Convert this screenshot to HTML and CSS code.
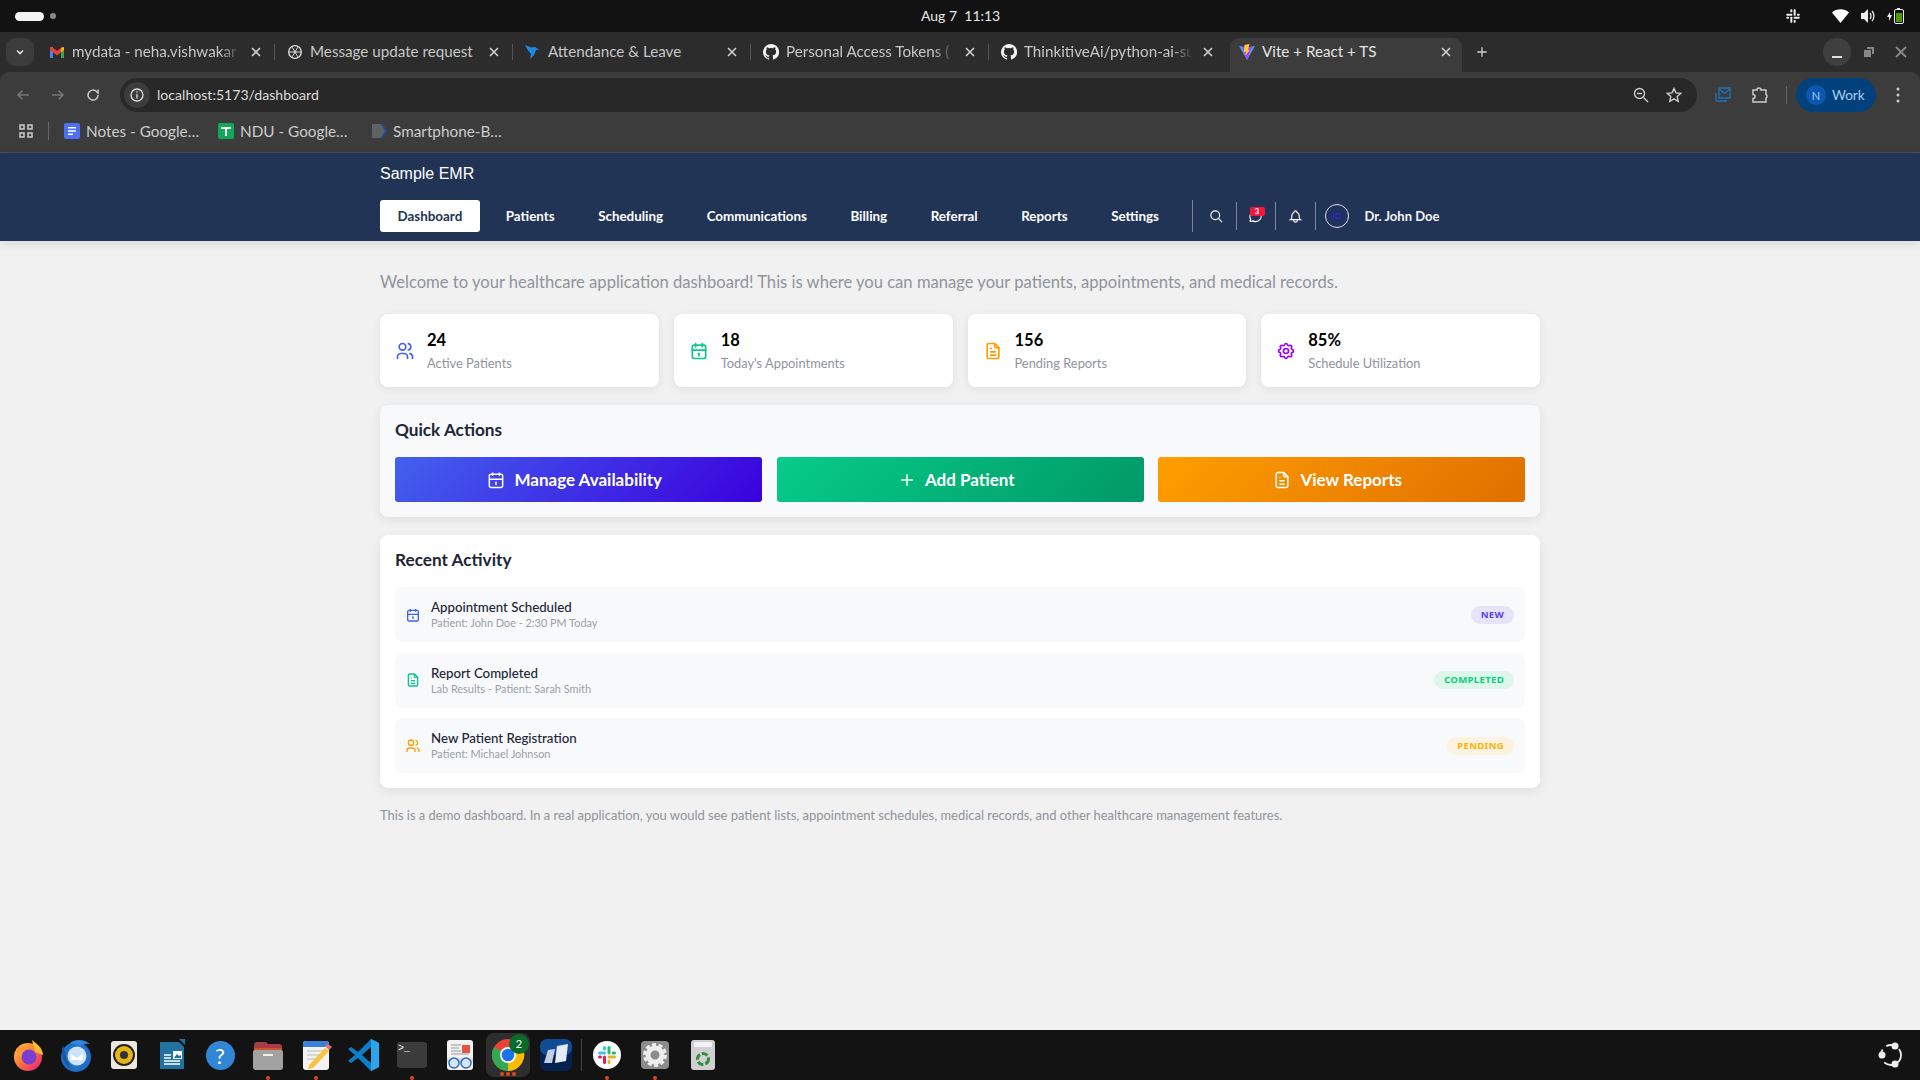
FILE: index.html
```html
<!DOCTYPE html>
<html lang="en">
<head>
<meta charset="utf-8">
<title>Vite + React + TS</title>
<link rel="stylesheet" href="styles.css">
</head>
<body>
<svg class="defs" width="0" height="0" aria-hidden="true">
  <symbol id="i-users" viewBox="0 0 24 24"><circle cx="9" cy="7" r="4"/><path d="M3 21v-2a4 4 0 0 1 4-4h4a4 4 0 0 1 4 4v2"/><path d="M16 3.13a4 4 0 0 1 0 7.75"/><path d="M21 21v-2a4 4 0 0 0-3-3.85"/></symbol>
  <symbol id="i-cal" viewBox="0 0 24 24"><rect x="4" y="5" width="16" height="16" rx="2"/><path d="M16 3v4M8 3v4M4 11h16M11 15h1v3"/></symbol>
  <symbol id="i-doc" viewBox="0 0 24 24"><path d="M14 3v4a1 1 0 0 0 1 1h4"/><path d="M17 21H7a2 2 0 0 1-2-2V5a2 2 0 0 1 2-2h7l5 5v11a2 2 0 0 1-2 2z"/><path d="M9 9h1M9 13h6M9 17h6"/></symbol>
  <symbol id="i-gear" viewBox="0 0 24 24"><path d="M10.325 4.317c.426-1.756 2.924-1.756 3.35 0a1.724 1.724 0 0 0 2.573 1.066c1.543-.94 3.31.826 2.37 2.37a1.724 1.724 0 0 0 1.065 2.572c1.756.426 1.756 2.924 0 3.35a1.724 1.724 0 0 0-1.066 2.573c.94 1.543-.826 3.31-2.37 2.37a1.724 1.724 0 0 0-2.572 1.065c-.426 1.756-2.924 1.756-3.35 0a1.724 1.724 0 0 0-2.573-1.066c-1.543.94-3.31-.826-2.37-2.37a1.724 1.724 0 0 0-1.065-2.572c-1.756-.426-1.756-2.924 0-3.35a1.724 1.724 0 0 0 1.066-2.573c-.94-1.543.826-3.31 2.37-2.37 1 .608 2.296.07 2.572-1.065z"/><circle cx="12" cy="12" r="3"/></symbol>
  <symbol id="i-plus" viewBox="0 0 24 24"><path d="M12 5v14M5 12h14"/></symbol>
  <symbol id="i-search" viewBox="0 0 24 24"><circle cx="10" cy="10" r="7"/><path d="M21 21l-6-6"/></symbol>
  <symbol id="i-msg" viewBox="0 0 24 24"><path d="M3 20l1.3-3.9C1.976 12.663 2.874 8.228 6.4 5.726c3.526-2.501 8.59-2.296 11.845.48 3.255 2.777 3.695 7.266 1.029 10.501-2.666 3.235-7.615 4.215-11.574 2.293L3 20"/></symbol>
  <symbol id="i-bell" viewBox="0 0 24 24"><path d="M10 5a2 2 0 1 1 4 0 7 7 0 0 1 4 6v3a4 4 0 0 0 2 3H4a4 4 0 0 0 2-3v-3a7 7 0 0 1 4-6"/><path d="M9 17v1a3 3 0 0 0 6 0v-1"/></symbol>
  <symbol id="i-x" viewBox="0 0 12 12"><path d="M2 2l8 8M10 2l-8 8"/></symbol>
  <symbol id="i-gh" viewBox="0 0 16 16"><path d="M8 0a8 8 0 0 0-2.53 15.59c.4.07.55-.17.55-.38v-1.34c-2.23.48-2.7-1.07-2.7-1.07-.36-.93-.89-1.17-.89-1.17-.73-.5.05-.49.05-.49.8.06 1.23.83 1.23.83.72 1.22 1.87.87 2.33.66.07-.52.28-.87.5-1.07-1.78-.2-3.64-.89-3.64-3.95 0-.87.31-1.59.82-2.15-.08-.2-.36-1.02.08-2.12 0 0 .67-.21 2.2.82a7.6 7.6 0 0 1 4 0c1.53-1.04 2.2-.82 2.2-.82.44 1.1.16 1.92.08 2.12.51.56.82 1.27.82 2.15 0 3.07-1.87 3.75-3.65 3.95.29.25.54.73.54 1.48v2.2c0 .21.15.46.55.38A8 8 0 0 0 8 0z"/></symbol>
</svg>

<div class="topbar">
  <div class="activities"><span class="pill"></span><span class="dot"></span></div>
  <div class="clock">Aug 7&nbsp;&nbsp;11:13</div>
  <div class="tray">
    <svg class="tray-slack" width="16" height="16" viewBox="0 0 24 24"><g fill="#eee"><rect x="2" y="8.500" width="9" height="3" rx="1"/><rect x="8" y="2" width="3" height="4.500" rx="1"/><rect x="13" y="2" width="3" height="9.500" rx="1"/><rect x="18" y="8.500" width="4" height="3" rx="1"/><rect x="13" y="13" width="9" height="3" rx="1"/><rect x="13" y="18" width="3" height="4" rx="1"/><rect x="8" y="13" width="3" height="9" rx="1"/><rect x="2" y="13" width="4" height="3" rx="1"/></g></svg>
    <svg class="tray-wifi" width="17" height="14" viewBox="0 0 17 14"><path fill="#fff" d="M0 3.5C4.5-.8 12.500-.8 17 3.500L8.500 14z"/></svg>
    <svg class="tray-vol" width="16" height="16" viewBox="0 0 16 16"><path fill="#eee" d="M1 5h3l4-4v14l-4-4H1z"/><path fill="none" stroke="#eee" stroke-width="1.300" d="M10 5c1.300 1.500 1.300 4.500 0 6M12 3c2.500 2.500 2.500 7.500 0 10"/></svg>
    <svg class="tray-bat" width="18" height="18" viewBox="0 0 18 18"><path fill="#eee" d="M3 5L0 10h2v4l3-6H3z"/><rect x="7.500" y="2.500" width="9" height="14" rx="1.500" fill="none" stroke="#eee"/><rect x="7" y="1" width="3" height="1" fill="#eee" transform="translate(3 0)"/><rect x="9" y="6" width="6" height="9" fill="#4e9a06"/></svg>
  </div>
</div>

<div class="browser">
<div class="tabstrip">
  <div class="tablist"><svg width="12" height="12" viewBox="0 0 12 12"><path d="M3 4.500l3 3 3-3" fill="none" stroke="#e0e0e0" stroke-width="1.600"/></svg></div>
  <div class="tab">
    <svg class="fav" width="16" height="16" viewBox="0 0 16 16"><path fill="#4285f4" d="M1 3h3v11H1z"/><path fill="#34a853" d="M12 3h3v11h-3z"/><path fill="#ea4335" d="M1 3h2l5 4 5-4h2v3l-7 5.500L1 6z"/><path fill="#fbbc04" d="M12 4.500L15 3v3l-3 2.300z"/></svg>
    <span class="title fade">mydata - neha.vishwakar</span><svg class="close"><use href="#i-x"/></svg>
  </div>
  <div class="tab">
    <svg class="fav" width="16" height="16" viewBox="0 0 24 24"><circle cx="12" cy="12" r="9.500" fill="none" stroke="#ddd" stroke-width="2"/><path fill="none" stroke="#ddd" stroke-width="1.500" d="M8 5l8 14M16 5L8 19M3 12h18"/></svg>
    <span class="title">Message update request</span><svg class="close"><use href="#i-x"/></svg>
  </div>
  <div class="tab">
    <svg class="fav" width="16" height="16" viewBox="0 0 16 16"><path fill="#1e88e5" d="M0 1l6 2.500L10 3l4 2.500-3 .5-2 5-4 4 1-5-3-3.500z"/></svg>
    <span class="title">Attendance &amp; Leave</span><svg class="close"><use href="#i-x"/></svg>
  </div>
  <div class="tab">
    <svg class="fav gh"><use href="#i-gh"/></svg>
    <span class="title fade">Personal Access Tokens (</span><svg class="close"><use href="#i-x"/></svg>
  </div>
  <div class="tab last">
    <svg class="fav gh"><use href="#i-gh"/></svg>
    <span class="title fade">ThinkitiveAi/python-ai-su</span><svg class="close"><use href="#i-x"/></svg>
  </div>
  <div class="tab active">
    <svg class="fav" width="16" height="16" viewBox="0 0 16 16"><path fill="#41a5ee" d="M0 2l8 1.500L16 2 8 16z"/><path fill="#bd34fe" d="M3 2.500l5 1 5-1L8 16z"/><path fill="#ffd028" d="M10.500 0L5.500 1l-.5 7 2-.5-.5 4L11 5.500l-2 .5z"/></svg>
    <span class="title">Vite + React + TS</span><svg class="close"><use href="#i-x"/></svg>
  </div>
  <div class="newtab"><svg width="16" height="16"><use href="#i-plus"/></svg></div>
  <div class="winctl">
    <span class="wc wc-min"><i></i></span>
    <span class="wc"><svg width="12" height="12" viewBox="0 0 12 12"><path fill="#888" d="M4 1h7v7H9V3H4z"/><rect x="1" y="4" width="7" height="7" fill="#888"/></svg></span>
    <span class="wc"><svg width="12" height="12" viewBox="0 0 12 12"><path d="M1 1l10 10M11 1L1 11" stroke="#888" stroke-width="1.800"/></svg></span>
  </div>
</div>

<div class="chrome-body">
  <div class="toolbar">
    <svg class="nav-ic" width="16" height="16" viewBox="0 0 16 16"><path d="M14 8H3M7.500 3.500L3 8l4.500 4.500" fill="none" stroke="#777" stroke-width="1.500"/></svg>
    <svg class="nav-ic" width="16" height="16" viewBox="0 0 16 16"><path d="M2 8h11M8.500 3.500L13 8l-4.500 4.500" fill="none" stroke="#777" stroke-width="1.500"/></svg>
    <svg class="nav-ic" width="16" height="16" viewBox="0 0 16 16"><path d="M13 8a5 5 0 1 1-1.500-3.500L13 6V2.500" fill="none" stroke="#ccc" stroke-width="1.500"/></svg>
    <div class="omnibox">
      <span class="site-info"><svg width="14" height="14" viewBox="0 0 14 14"><circle cx="7" cy="7" r="6" fill="none" stroke="#ddd" stroke-width="1.300"/><path d="M7 6v4.500" stroke="#ddd" stroke-width="1.300"/><circle cx="7" cy="4" r=".8" fill="#ddd"/></svg></span>
      <span class="url">localhost:5173/dashboard</span>
      <svg class="omni-zoom" width="16" height="16" viewBox="0 0 16 16"><circle cx="6.500" cy="6.500" r="5" fill="none" stroke="#ccc" stroke-width="1.400"/><path d="M10.500 10.500L15 15M4 6.500h5" stroke="#ccc" stroke-width="1.400"/></svg>
      <svg class="omni-star" width="16" height="16" viewBox="0 0 16 16"><path d="M8 1.500l2 4.400 4.700.5-3.500 3.200 1 4.700L8 11.900l-4.200 2.400 1-4.700L1.300 6.400 6 5.900z" fill="none" stroke="#ccc" stroke-width="1.400"/></svg>
    </div>
    <svg class="tb-ext" width="16" height="16" viewBox="0 0 16 16"><path d="M1 6v8h11M4 4V1h11v10H4z" fill="none" stroke="#1c74b8" stroke-width="1.300"/><path d="M4 2l5.500 4.500L15 2" fill="none" stroke="#1c74b8" stroke-width="1.300"/></svg>
    <svg class="tb-puzzle" width="18" height="18" viewBox="0 0 18 18"><path d="M2 4h4a2 2 0 0 1 4 0h5v4.500a2 2 0 0 1 0 3.500V16H2v-3.500a2 2 0 0 0 0-4z" fill="none" stroke="#ccc" stroke-width="1.500"/></svg>
    <span class="tb-sep"></span>
    <div class="profile"><span class="avatar-n">N</span><span>Work</span></div>
    <svg class="tb-menu" width="4" height="16" viewBox="0 0 4 16"><circle cx="2" cy="2" r="1.500" fill="#ccc"/><circle cx="2" cy="8" r="1.500" fill="#ccc"/><circle cx="2" cy="14" r="1.500" fill="#ccc"/></svg>
  </div>
  <div class="bookmarks">
    <svg class="bm-apps" width="14" height="14" viewBox="0 0 14 14"><path fill="none" stroke="#ccc" stroke-width="1.500" d="M1 1h4v4H1zM9 1h4v4H9zM1 9h4v4H1zM9 9h4v4H9z"/></svg>
    <span class="bm-sep"></span>
    <div class="bm bm-1"><svg width="16" height="16" viewBox="0 0 16 16"><rect width="16" height="16" rx="2" fill="#4d6ff1"/><path d="M4 4h8v1.500H4zM4 7.200h8v1.500H4zM4 10.500h5V12H4z" fill="#fff"/></svg><span>Notes - Google…</span></div>
    <div class="bm bm-2"><svg width="16" height="16" viewBox="0 0 16 16"><rect width="16" height="16" rx="2" fill="#0fa958"/><path d="M3 4h10v2H9v7H7V6H3z" fill="#fff"/></svg><span>NDU - Google…</span></div>
    <div class="bm bm-3"><svg width="16" height="16" viewBox="0 0 16 16"><path d="M1 1h9l4 7-4 7H1z" fill="#5f6368"/><path d="M10 1l4 7-4 7h2l4-7-4-7z" fill="#1a4fa0"/></svg><span>Smartphone-B…</span></div>
  </div>
</div>
</div>

<header class="app-header">
  <div class="container">
    <div class="brand">Sample EMR</div>
    <nav class="nav">
      <a class="nav-item active">Dashboard</a>
      <a class="nav-item">Patients</a>
      <a class="nav-item">Scheduling</a>
      <a class="nav-item">Communications</a>
      <a class="nav-item">Billing</a>
      <a class="nav-item">Referral</a>
      <a class="nav-item">Reports</a>
      <a class="nav-item">Settings</a>
      <span class="vsep first"></span>
      <span class="nav-icon nav-icon-first"><svg class="ic-15"><use href="#i-search"/></svg></span>
      <span class="vsep short"></span>
      <span class="nav-icon badge-host"><svg class="ic-15"><use href="#i-msg"/></svg><b class="count">3</b></span>
      <span class="vsep short"></span>
      <span class="nav-icon"><svg class="ic-15"><use href="#i-bell"/></svg></span>
      <span class="vsep short"></span>
      <span class="user-avatar">JD</span>
      <span class="user-name">Dr. John Doe</span>
    </nav>
  </div>
</header>

<main class="main">
  <div class="container">
    <p class="welcome">Welcome to your healthcare application dashboard! This is where you can manage your patients, appointments, and medical records.</p>
    <section class="stats">
      <div class="stat"><svg class="stat-ic c-blue"><use href="#i-users"/></svg><div><div class="num">24</div><div class="lbl">Active Patients</div></div></div>
      <div class="stat"><svg class="stat-ic c-green"><use href="#i-cal"/></svg><div><div class="num">18</div><div class="lbl">Today's Appointments</div></div></div>
      <div class="stat"><svg class="stat-ic c-orange"><use href="#i-doc"/></svg><div><div class="num">156</div><div class="lbl">Pending Reports</div></div></div>
      <div class="stat"><svg class="stat-ic c-purple"><use href="#i-gear"/></svg><div><div class="num">85%</div><div class="lbl">Schedule Utilization</div></div></div>
    </section>
    <section class="panel panel-tint">
      <h2 class="panel-title">Quick Actions</h2>
      <div class="actions">
        <button class="action a-blue"><svg class="ic-20"><use href="#i-cal"/></svg>Manage Availability</button>
        <button class="action a-green"><svg class="ic-20"><use href="#i-plus"/></svg>Add Patient</button>
        <button class="action a-orange"><svg class="ic-20"><use href="#i-doc"/></svg>View Reports</button>
      </div>
    </section>
    <section class="panel panel-recent">
      <h2 class="panel-title">Recent Activity</h2>
      <div class="rows">
        <div class="row"><svg class="row-ic c-blue"><use href="#i-cal"/></svg><div class="row-text"><div class="row-title">Appointment Scheduled</div><div class="row-sub">Patient: John Doe - 2:30 PM Today</div></div><span class="tag t-new">NEW</span></div>
        <div class="row"><svg class="row-ic c-green"><use href="#i-doc"/></svg><div class="row-text"><div class="row-title">Report Completed</div><div class="row-sub">Lab Results - Patient: Sarah Smith</div></div><span class="tag t-done">COMPLETED</span></div>
        <div class="row"><svg class="row-ic c-orange"><use href="#i-users"/></svg><div class="row-text"><div class="row-title">New Patient Registration</div><div class="row-sub">Patient: Michael Johnson</div></div><span class="tag t-pend">PENDING</span></div>
      </div>
    </section>
    <p class="note">This is a demo dashboard. In a real application, you would see patient lists, appointment schedules, medical records, and other healthcare management features.</p>
  </div>
</main>

<footer class="dock">
  <span class="app"><svg width="36" height="36" viewBox="0 0 36 36"><defs><linearGradient id="ff" x1="0" y1="0" x2="1" y2="1"><stop offset="0" stop-color="#ffd43b"/><stop offset=".5" stop-color="#ff7139"/><stop offset="1" stop-color="#e31587"/></linearGradient></defs><circle cx="18" cy="20" r="14" fill="url(#ff)"/><path d="M22 3c4 3 11 8 11 15l-8-3z" fill="#ffbd2e"/><circle cx="19" cy="20" r="7.500" fill="#7a3fd1"/><path d="M6 12c4-4 9-3 13 0-5 0-8 3-7 8-3-1-6-4-6-8z" fill="#ff9a3c"/></svg></span>
  <span class="app"><svg width="36" height="36" viewBox="0 0 36 36"><circle cx="18" cy="20" r="15" fill="#1f6fc9"/><path d="M5 8c-3 8 0 20 9 24C8 25 7 15 5 8z" fill="#155a9f"/><path d="M12 6c6-5 15-3 20 1-6-1-8 1-9 2z" fill="#2f86dd"/><circle cx="19" cy="19" r="9.500" fill="#cfe3f7"/><path d="M13 17l6 4 6-4v6H13z" fill="#fff"/></svg></span>
  <span class="app"><svg width="36" height="36" viewBox="0 0 36 36"><rect x="5" y="4" width="26" height="28" rx="3" fill="#ece8db"/><circle cx="18" cy="18" r="11" fill="#222"/><circle cx="18" cy="18" r="9" fill="#e7b416"/><circle cx="18" cy="18" r="4" fill="#333"/></svg></span>
  <span class="app"><svg width="36" height="36" viewBox="0 0 36 36"><path d="M6 5h19l5 5v22H6z" fill="#21729e"/><path d="M25 2l6 0v6z" fill="#21729e"/><path d="M10 18h7M10 21h7M10 24h16M10 27h16" stroke="#fff" stroke-width="1.300"/><path d="M19 14h9v8h-9z" fill="#fff"/><path d="M20 21l3-4 2 2 2-1v3z" fill="#21729e"/></svg></span>
  <span class="app"><span class="help">?</span></span>
  <span class="app run"><svg width="36" height="36" viewBox="0 0 36 36"><path d="M4 8a3 3 0 0 1 3-3h9l2 2h11a3 3 0 0 1 3 3v4H4z" fill="#a63c48"/><path d="M4 11h28v4H4z" fill="#d2562c"/><path d="M3 15a2 2 0 0 1 2-2h26a2 2 0 0 1 2 2v15a3 3 0 0 1-3 3H6a3 3 0 0 1-3-3z" fill="#a2a2a2"/><rect x="13" y="17" width="10" height="2" fill="#eee"/></svg></span>
  <span class="app run"><svg width="36" height="36" viewBox="0 0 36 36"><rect x="5" y="4" width="26" height="29" rx="3" fill="#f2f2f2"/><path d="M5 7a3 3 0 0 1 3-3h20a3 3 0 0 1 3 3v3H5z" fill="#3c7fd9"/><path d="M9 14h18M9 18h14M9 22h10" stroke="#bbb"/><path d="M11 28L27 11l4 3-16 17-5 1z" fill="#f6c343"/><path d="M27 9l3-2 4 3-3 3z" fill="#ee6a72"/></svg></span>
  <span class="app"><svg width="36" height="36" viewBox="0 0 36 36"><path d="M25 2l8 4v24l-8 4-13-13-7 5-3-2 7-6-7-6 3-2 7 5z" fill="#0a7ec9"/><path d="M25 2l8 4v24l-8 4z" fill="#2aa4ec"/><path d="M25 10l-9 8 9 8z" fill="#131313"/></svg></span>
  <span class="app run"><span class="term">&gt;_</span></span>
  <span class="app"><svg width="36" height="36" viewBox="0 0 36 36"><rect x="5" y="3" width="26" height="30" rx="3" fill="#f2f2f2"/><path d="M9 8h10M9 11h8M9 14h10M9 17h18" stroke="#999"/><rect x="20" y="8" width="8" height="8" fill="#e25546"/><path d="M5 21h26v4H5z" fill="#ddd"/><circle cx="12" cy="26" r="5" fill="#d6e4f5" stroke="#2c6cb4" stroke-width="1.500"/><circle cx="24" cy="26" r="5" fill="#d6e4f5" stroke="#2c6cb4" stroke-width="1.500"/></svg></span>
  <span class="app chrome-app">
    <svg width="36" height="36" viewBox="0 0 36 36"><circle cx="18" cy="18" r="16" fill="#ea4335"/><path d="M18 18L32 10a16 16 0 0 1-14 24z" fill="#fbbc04"/><path d="M18 18v16A16 16 0 0 1 4.140 10z" fill="#34a853"/><circle cx="18" cy="18" r="8" fill="#fff"/><circle cx="18" cy="18" r="6.300" fill="#1a73e8"/></svg>
    <b class="chrome-count">2</b>
    <i class="trio"></i>
  </span>
  <span class="app app-tight"><svg width="36" height="36" viewBox="0 0 36 36"><rect x="2" y="2" width="32" height="32" rx="7" fill="#06224c"/><rect x="2" y="2" width="32" height="16" rx="7" fill="#0f4c94"/><path d="M19 9l11-2-2 17-11 2z" fill="#e6ecf7"/><path d="M10 13l7-1-3 14H6z" fill="#c3cfe4"/></svg></span>
  <span class="dock-sep"></span>
  <span class="app run"><span class="slack-disc"><svg width="24" height="24" viewBox="0 0 24 24"><rect x="3" y="8.500" width="8" height="3" rx="1.500" fill="#36c5f0"/><rect x="8" y="3" width="3" height="4.500" rx="1.500" fill="#36c5f0"/><rect x="12.500" y="3" width="3" height="8.500" rx="1.500" fill="#2eb67d"/><rect x="16.500" y="8.500" width="4.500" height="3" rx="1.500" fill="#2eb67d"/><rect x="12.500" y="12.500" width="8.500" height="3" rx="1.500" fill="#ecb22e"/><rect x="12.500" y="16.500" width="3" height="4.500" rx="1.500" fill="#ecb22e"/><rect x="8" y="12.500" width="3" height="8.500" rx="1.500" fill="#e01e5a"/><rect x="3" y="12.500" width="4" height="3" rx="1.500" fill="#e01e5a"/></svg></span></span>
  <span class="app run"><svg width="36" height="36" viewBox="0 0 36 36"><rect x="4" y="4" width="28" height="28" rx="4" fill="#8c8c8c"/><circle cx="18" cy="18" r="7" fill="none" stroke="#eee" stroke-width="5"/><circle cx="18" cy="18" r="10.500" fill="none" stroke="#eee" stroke-width="3" stroke-dasharray="4 2.600"/></svg></span>
  <span class="app"><svg width="36" height="36" viewBox="0 0 36 36"><rect x="6" y="3" width="24" height="30" rx="3" fill="#d0d0d0"/><rect x="9" y="5" width="18" height="5" rx="1" fill="#f3f3f3"/><circle cx="18" cy="22" r="5.500" fill="none" stroke="#2f8f3d" stroke-width="3" stroke-dasharray="6 2"/></svg></span>
  <span class="dock-spacer"></span>
  <span class="app app-last"><svg width="26" height="26" viewBox="0 0 26 26"><circle cx="13" cy="13" r="10" fill="none" stroke="#eee" stroke-width="1.800" stroke-dasharray="9 5"/><circle cx="17" cy="4" r="3.500" fill="#eee"/><circle cx="4" cy="13" r="3.500" fill="#eee"/><circle cx="17" cy="22" r="3.500" fill="#eee"/></svg></span>
</footer>
</body>
</html>
```
FILE: styles.css
```css
* { box-sizing: border-box; }
html, body { margin: 0; height: 100%; }
body {
  width: 1920px; height: 1080px; overflow: hidden;
  display: flex; flex-direction: column;
  background: #f1f1f1;
  font-family: Lato, "Noto Sans", sans-serif;
}
.defs { position: absolute; }

/* GNOME top bar */
.topbar { flex: 0 0 32px; background: #121212; display: flex; align-items: center; position: relative; color: #eee; }
.activities { display: flex; align-items: center; gap: 6px; padding-left: 15px; }
.pill { width: 29px; height: 9px; border-radius: 5px; background: #f4f4f4; }
.dot { width: 6px; height: 6px; border-radius: 50%; background: #8b8b8b; }
.clock { position: absolute; left: 921px; top: 7px; font-size: 14px; line-height: 18px; color: #e8e8e8; }
.tray { margin-left: auto; display: flex; align-items: center; padding-right: 15px; }
.tray-slack { margin-right: 31px; }
.tray-wifi { margin-right: 11px; }
.tray-vol { margin-right: 11px; }

/* Browser */
.browser { flex: 0 0 121px; background: #2c2c2c; }
.tabstrip { height: 40px; display: flex; align-items: flex-end; padding-left: 6px; color: #c7c7c7; }
.tablist { width: 28px; height: 28px; margin-bottom: 6px; border-radius: 9px; background: #3c3c3c; display: flex; align-items: center; justify-content: center; }
.tab { width: 238px; height: 34px; display: flex; align-items: center; padding: 0 0 6px 15px; position: relative; font-size: 15.200px; flex: none; }
.tab::after { content: ""; position: absolute; right: -3px; top: 6px; height: 16px; width: 1px; background: #555; }
.tab.last::after, .tab.active::after { display: none; }
.tab.active { width: 232px; margin-left: 6px; padding-left: 9px; background: #3c3c3c; border-radius: 9px 9px 0 0; color: #e3e3e3; }
.fav { width: 16px; height: 16px; flex: none; margin-right: 7px; }
.fav.gh { fill: #f2f2f2; }
.title { width: 174px; overflow: hidden; white-space: nowrap; flex: none; margin-bottom: 2px; }
.title.fade { -webkit-mask-image: linear-gradient(90deg, #000 85%, transparent 97%); mask-image: linear-gradient(90deg, #000 85%, transparent 97%); }
.close { width: 12px; height: 12px; flex: none; margin-left: 4px; stroke: #d0d0d0; stroke-width: 1.600; fill: none; }
.newtab { width: 40px; height: 34px; padding: 0 0 6px 12px; display: flex; align-items: center; stroke: #d0d0d0; stroke-width: 2; fill: none; }
.winctl { margin-left: auto; display: flex; align-items: center; height: 34px; padding-bottom: 6px; padding-right: 3px; }
.wc { width: 32px; height: 28px; display: flex; align-items: center; justify-content: center; }
.wc-min { width: 28px; margin-right: 2px; border-radius: 50%; background: #3f3f3f; align-items: flex-end; padding-bottom: 8px; }
.wc-min i { width: 10px; height: 2px; background: #ddd; display: block; }

.chrome-body { height: 81px; background: #3c3c3c; border-bottom: 1px solid #505050; border-radius: 9px 9px 0 0; color: #ccc; }
.toolbar { height: 40px; display: flex; align-items: center; padding-left: 15px; padding-top: 6px; }
.nav-ic { margin-right: 19px; flex: none; }
.nav-ic:nth-child(3) { margin-right: 0; }
.omnibox { margin-left: 19px; width: 1577px; height: 34px; border-radius: 17px; background: #282828; display: flex; align-items: center; padding-left: 4px; flex: none; }
.site-info { width: 26px; height: 26px; border-radius: 50%; background: #3c3c3c; display: flex; align-items: center; justify-content: center; flex: none; }
.url { margin-left: 7px; margin-bottom: 2px; font-size: 14.100px; color: #dcdcdc; }
.omni-zoom { margin-left: auto; }
.omni-star { margin-left: 17px; margin-right: 15px; }
.tb-ext { margin-left: 18px; flex: none; }
.tb-puzzle { margin-left: 20px; flex: none; }
.tb-sep { width: 1px; height: 18px; background: #666; margin-left: 17px; flex: none; }
.profile { margin-left: 9px; width: 80px; height: 34px; border-radius: 17px; background: #02417c; display: flex; align-items: center; font-size: 13.500px; color: #a9cdf2; padding-left: 10px; gap: 6px; flex: none; }
.avatar-n { width: 20px; height: 20px; border-radius: 50%; background: #0b57b0; display: flex; align-items: center; justify-content: center; font-size: 11px; }
.tb-menu { margin-left: 20px; flex: none; }
.bookmarks { height: 40px; display: flex; align-items: center; padding: 0 0 2px 19px; font-size: 15.300px; }
.bm-sep { width: 1px; height: 18px; background: #666; margin-left: 15px; }
.bm { display: flex; align-items: center; gap: 6px; }
.bm-1 { margin-left: 15px; width: 154px; }
.bm-2 { width: 153px; }

/* App header */
.container { width: 1160px; margin: 0 auto; }
.app-header { flex: 0 0 88px; background: #213455; color: #fff; box-shadow: 0 2px 10px rgba(0,0,0,.12); position: relative; }
.brand { font-family: "Liberation Sans", Arial, sans-serif; font-size: 16px; line-height: 20px; padding-top: 11px; height: 47px; }
.nav { display: flex; align-items: center; height: 32px; }
.nav-item { font-size: 13.400px; font-weight: 700; padding: 0 17.500px; line-height: 32px; margin-right: 8.500px; border-radius: 3px; color: #fff; }
.nav-item.active { background: #fff; color: #213455; }
.vsep { width: 1px; height: 28px; background: #7a879c; flex: none; }
.vsep.first { height: 32px; margin-left: 6.500px; }
.nav-icon { width: 38.500px; display: flex; align-items: center; justify-content: center; position: relative; stroke: #fff; stroke-width: 1.800; fill: none; }
.nav-icon-first { width: 43px; padding-left: 5px; }
.ic-15 { width: 15px; height: 15px; }
.count { position: absolute; left: 13px; top: -2px; width: 15px; height: 9px; border-radius: 2px; background: #f5153f; color: #fff; font-size: 7.500px; line-height: 9px; text-align: center; }
.user-avatar { width: 24px; height: 24px; margin-left: 9px; border: 1px solid #dfe4ec; border-radius: 50%; background: #20305f; color: #3a22d0; font-size: 8px; font-weight: 700; display: flex; align-items: center; justify-content: center; flex: none; }
.user-name { margin-left: 16px; font-size: 13px; font-weight: 700; color: #f3f5f8; white-space: nowrap; }

/* Main */
.main { flex: 1; min-height: 0; }
.welcome { margin: 0; padding-top: 30px; font-size: 16.600px; line-height: 22px; color: #8f949c; height: 73px; white-space: nowrap; }
.stats { display: grid; grid-template-columns: repeat(4, 1fr); gap: 15px; }
.stat { height: 73px; background: #fff; border-radius: 8px; box-shadow: 0 2px 8px rgba(0,0,0,.08); display: flex; align-items: center; gap: 12px; padding: 0 15px; }
.stat-ic { width: 20px; height: 20px; flex: none; fill: none; stroke-width: 2; stroke-linecap: round; stroke-linejoin: round; }
.c-blue { stroke: #4361ee; }
.c-green { stroke: #06c98a; }
.c-orange { stroke: #ff9e00; }
.c-purple { stroke: #9d00ff; }
.num { font-size: 16.500px; font-weight: 700; line-height: 22px; color: #000; }
.lbl { font-size: 12.850px; line-height: 20px; color: #8f949c; margin-top: 2px; }
.panel { margin-top: 18px; padding: 15px; border-radius: 8px; background: #fff; box-shadow: 0 3px 10px rgba(0,0,0,.08); }
.panel-tint { background: #f8f9fb; height: 112px; }
.panel-recent { height: 253px; }
.panel-title { margin: 0; font-size: 17.200px; font-weight: 700; line-height: 20px; color: #212534; }
.actions { display: grid; grid-template-columns: repeat(3, 1fr); gap: 14.500px; margin-top: 17px; }
.action { height: 45px; border: 0; border-radius: 3px; display: flex; align-items: center; justify-content: center; gap: 8px; font-family: inherit; font-size: 17px; font-weight: 700; color: #fff; stroke: #fff; fill: none; stroke-width: 1.800; padding: 0 8.500px 0 0; }
.ic-20 { width: 20px; height: 20px; }
.a-blue { background: linear-gradient(135deg, #4361ee, #3a00dd); }
.a-green { background: linear-gradient(135deg, #06cc8a, #019966); }
.a-orange { background: linear-gradient(135deg, #ff9e00, #e06f00); }
.rows { display: flex; flex-direction: column; gap: 10.500px; margin-top: 17px; }
.row { height: 55px; background: #f8f9fb; border-radius: 8px; display: flex; align-items: center; padding: 0 11px 0 10px; }
.row-ic { width: 16px; height: 16px; flex: none; fill: none; stroke-width: 2; margin-right: 10px; }
.row-text { flex: 1; }
.row-title { font-size: 13.250px; font-weight: 500; line-height: 17px; color: #212534; }
.row-sub { font-size: 10.900px; line-height: 14px; color: #9aa0a8; }
.tag { height: 18px; padding: 0 10px; border-radius: 9px; font-family: "Noto Sans", sans-serif; font-size: 9.600px; font-weight: 700; line-height: 18px; letter-spacing: .3px; }
.t-new { background: #e7e4fa; color: #5a3ff0; }
.t-done { background: #dff6ea; color: #0bd07e; }
.t-pend { background: #fbf3df; color: #ffb30a; }
.note { margin: 0; padding-top: 19px; font-size: 12.960px; line-height: 17px; color: #8f949c; white-space: nowrap; }

/* Dock */
.dock { flex: 0 0 50px; background: #131313; display: flex; align-items: center; padding-left: 10px; }
.app { width: 36px; height: 36px; margin-right: 12px; display: flex; align-items: center; justify-content: center; position: relative; flex: none; }
.app-tight { margin-right: 7px; }
.run::after { content: ""; position: absolute; left: 16px; bottom: -7px; width: 4px; height: 4px; border-radius: 50%; background: #e0491c; }
.help { width: 29px; height: 29px; border-radius: 50%; background: #3186d6; color: #fff; font-size: 22px; line-height: 29px; text-align: center; }
.term { width: 30px; height: 26px; background: #3b3b3b; border-radius: 3px; color: #eee; font-size: 10px; line-height: 14px; padding-left: 1px; font-family: "Liberation Mono", monospace; }
.chrome-app { background: #2e2e2e; border-radius: 8px; width: 44px; height: 44px; margin: 0 8px 0 -4px; }
.chrome-count { position: absolute; right: 1px; top: 1px; width: 20px; height: 20px; border-radius: 50%; background: #0a6b2b; color: #fff; font-size: 11px; font-weight: 400; line-height: 20px; text-align: center; }
.trio { position: absolute; left: 14px; bottom: 1px; width: 4px; height: 4px; border-radius: 50%; background: #e0491c; box-shadow: 6px 0 #e0491c, 12px 0 #e0491c; }
.dock-sep { width: 1px; height: 32px; background: #444; margin-right: 7px; flex: none; }
.slack-disc { width: 28px; height: 28px; border-radius: 50%; background: #fff; display: flex; align-items: center; justify-content: center; }
.dock-spacer { flex: 1; }
.app-last { margin-right: 11px; }
```
